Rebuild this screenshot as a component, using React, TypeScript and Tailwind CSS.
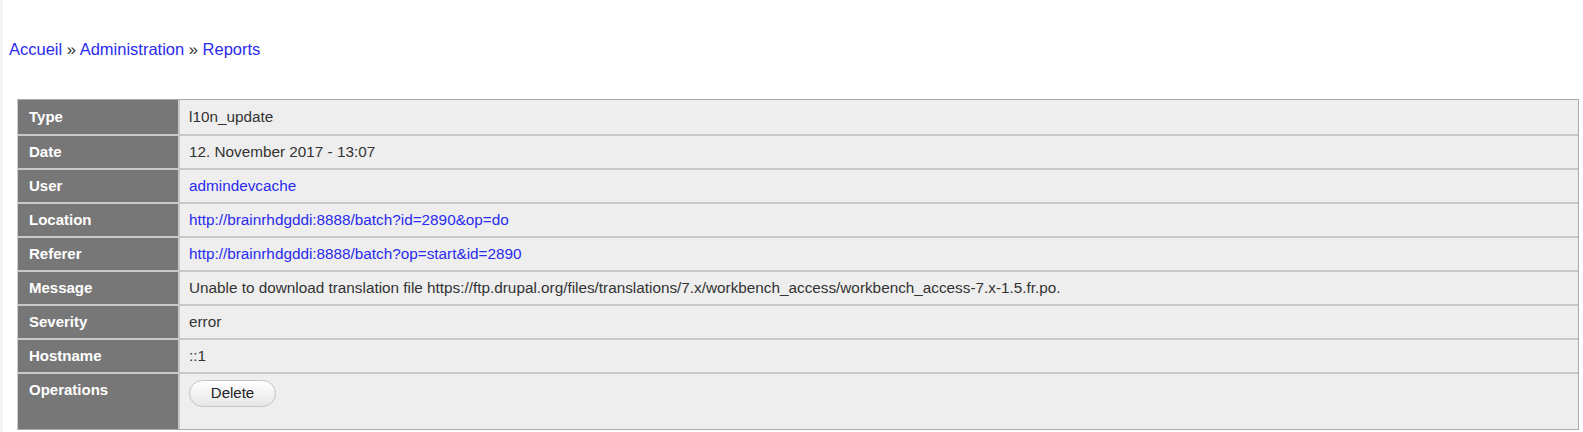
const rows: { label: string; value: string; link?: boolean }[] = [
  { label: 'Type', value: 'l10n_update' },
  { label: 'Date', value: '12. November 2017 - 13:07' },
  { label: 'User', value: 'admindevcache', link: true },
  { label: 'Location', value: 'http://brainrhdgddi:8888/batch?id=2890&op=do', link: true },
  { label: 'Referer', value: 'http://brainrhdgddi:8888/batch?op=start&id=2890', link: true },
  {
    label: 'Message',
    value:
      'Unable to download translation file https://ftp.drupal.org/files/translations/7.x/workbench_access/workbench_access-7.x-1.5.fr.po.',
  },
  { label: 'Severity', value: 'error' },
  { label: 'Hostname', value: '::1' },
]

export default function App() {
  return (
    <div
      className="flex h-[432px] w-[1583px] bg-white text-[15px] text-[#333]"
      style={{ fontFamily: '"Liberation Sans", Arial, sans-serif' }}>
      <div className="w-[3px] shrink-0 bg-[#f4f4f4]" />
      <div className="flex-1">
        <div className="pl-[6px] pt-[40px] text-[16.5px] leading-[18px] text-[#2a2af0]">
          <a href="#">Accueil</a>
          <span className="text-[#333]"> » </span>
          <a href="#">Administration</a>
          <span className="text-[#333]"> » </span>
          <a href="#">Reports</a>
        </div>

        <div className="ml-[14px] mt-[41px] w-[1562px] border-t border-r border-b border-[#aaa] border-l border-l-[#ccc]">
          {rows.map((row, i) => (
            <div key={row.label} className={`flex h-[34px] ${i > 0 ? 'border-t-2 border-[#c8c8c8]' : ''}`}>
              <div className="flex w-[160px] shrink-0 items-center bg-[#777] pl-[11px] pt-[1px] font-bold text-white">
                {row.label}
              </div>
              <div className="flex flex-1 items-center border-l-2 border-[#c8c8c8] bg-[#eee] pl-[9px] pt-[1px] text-[15.3px]">
                {row.link ? <a href="#" className="text-[#2a2af0]">{row.value}</a> : row.value}
              </div>
            </div>
          ))}
          <div className="flex h-[57px] border-t-2 border-[#c8c8c8]">
            <div className="w-[160px] shrink-0 bg-[#777] pl-[11px] pt-[5px] font-bold text-white">Operations</div>
            <div className="flex-1 border-l-2 border-[#c8c8c8] bg-[#eee] pl-[9px] pt-[6px]">
              <button
                type="button"
                className="h-[27px] w-[87px] rounded-full border border-[#c4c4c4] bg-gradient-to-b from-white to-[#e6e6e6] text-[15px] text-[#222]">
                Delete
              </button>
            </div>
          </div>
        </div>
      </div>
    </div>
  )
}
